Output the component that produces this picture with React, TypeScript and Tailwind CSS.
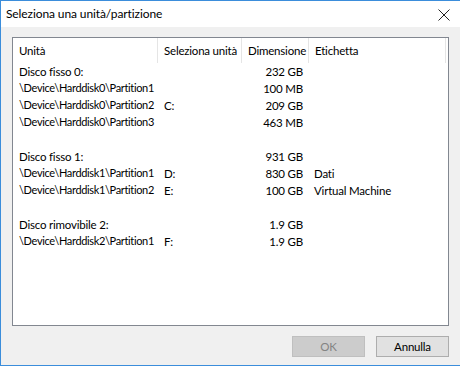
import React from "react";

type Row = { a: string; b?: string; c?: string; d?: string; path?: boolean } | null;

const rows: Row[] = [
  { a: "Disco fisso 0:", c: "232 GB" },
  { a: "\\Device\\Harddisk0\\Partition1", c: "100 MB", path: true },
  { a: "\\Device\\Harddisk0\\Partition2", b: "C:", c: "209 GB", path: true },
  { a: "\\Device\\Harddisk0\\Partition3", c: "463 MB", path: true },
  null,
  { a: "Disco fisso 1:", c: "931 GB" },
  { a: "\\Device\\Harddisk1\\Partition1", b: "D:", c: "830 GB", d: "Dati", path: true },
  { a: "\\Device\\Harddisk1\\Partition2", b: "E:", c: "100 GB", d: "Virtual Machine", path: true },
  null,
  { a: "Disco rimovibile 2:", c: "1.9 GB" },
  { a: "\\Device\\Harddisk2\\Partition1", b: "F:", c: "1.9 GB", path: true },
];

export default function App() {
  const font = { fontFamily: 'Lato, "Noto Sans", sans-serif' };
  return (
    <div className="w-[460px] h-[367px] bg-white" style={font}>
      <div className="w-[460px] h-[366px] border-l border-t border-b border-[#3b8ddb] flex flex-col text-[11.5px] tracking-[-0.2px] text-black">
        <div className="h-[26px] bg-white flex items-center justify-between pl-[5px] pr-[10px] shrink-0">
          <span className="text-[12px] tracking-[-0.1px] leading-none">Seleziona una unità/partizione</span>
          <svg width="12" height="12" viewBox="0 0 12 12" className="mt-[1px]">
            <path d="M0.5 0.5 L11.5 11.5 M11.5 0.5 L0.5 11.5" stroke="#222" strokeWidth="1" fill="none" />
          </svg>
        </div>
        <div className="flex-1 bg-[#f0f0f0] flex flex-col pl-[11px] pt-[10px] pb-[7px]">
          <div className="w-[437px] h-[289px] bg-white border border-[#828790] shrink-0">
            <div className="grid grid-cols-[145px_84px_67px_137px] h-[25px]">
              {["Unità", "Seleziona unità", "Dimensione", "Etichetta"].map((h) => (
                <div key={h} className="border-r border-[#e5e5e5] flex items-center pl-[6px] whitespace-nowrap">
                  {h}
                </div>
              ))}
            </div>
            <div className="flex flex-col">
              {rows.map((r, i) => (
                <div key={i} className="grid grid-cols-[145px_84px_67px_137px] h-[17px] items-center whitespace-nowrap">
                  <div className={r?.path ? "pl-[6px] text-[11px] tracking-[-0.35px]" : "pl-[6px]"}>{r?.a ?? ""}</div>
                  <div className="pl-[6px]">{r?.b ?? ""}</div>
                  <div className="pr-[6px] text-right">{r?.c ?? ""}</div>
                  <div className="pl-[5px]">{r?.d ?? ""}</div>
                </div>
              ))}
            </div>
          </div>
          <div className="flex justify-end gap-[11px] pr-[11px] mt-[10px]">
            <div className="w-[73px] h-[21px] bg-[#cccccc] border border-[#bfbfbf] text-[#838383] flex items-center justify-center">OK</div>
            <div className="w-[73px] h-[21px] bg-[#e1e1e1] border border-[#adadad] flex items-center justify-center">Annulla</div>
          </div>
        </div>
      </div>
    </div>
  );
}
